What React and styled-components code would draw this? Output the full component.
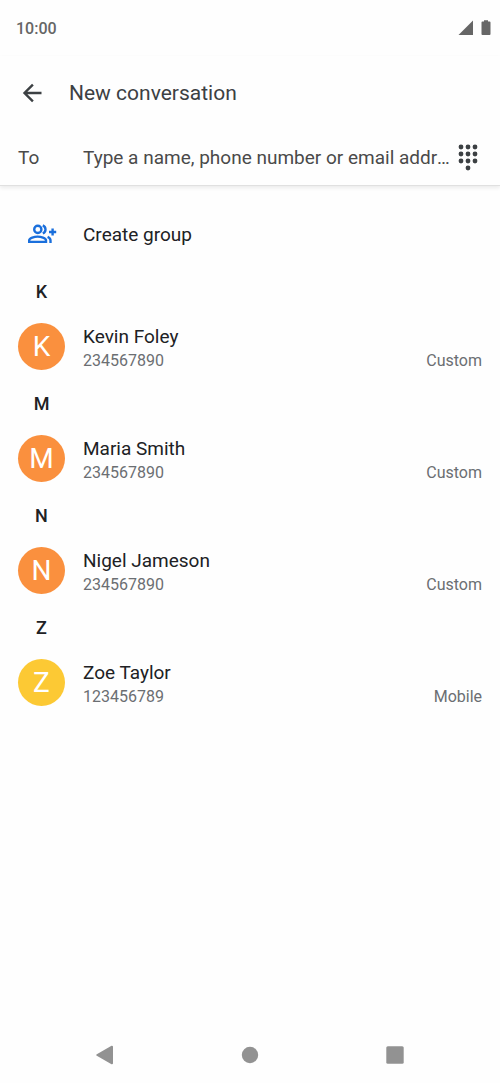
import React from "react";
import styled, { createGlobalStyle } from "styled-components";

const GlobalStyle = createGlobalStyle`
  *, *::before, *::after { box-sizing: border-box; }
  body { margin: 0; background: #fefefe; font-family: Roboto, "Liberation Sans", sans-serif; color: #202124; }
  h1, h2, p, ul { margin: 0; padding: 0; font-weight: 400; }
  button, input { font: inherit; color: inherit; border: 0; padding: 0; background: none; }
  button { cursor: pointer; }
  svg { display: block; }
`;

const Screen = styled.div`
  display: flex;
  flex-direction: column;
  min-height: 100vh;
`;

const StatusBar = styled.div`
  display: flex;
  align-items: center;
  justify-content: space-between;
  height: 56px;
  padding: 0 9px 0 16px;
  color: #666666;
`;

const Clock = styled.time`
  padding-top: 1px;
  font-size: 16px;
  line-height: 24px;
  font-weight: 500;
`;

const StatusIcons = styled.div`
  display: flex;
  gap: 8px;
`;

const Header = styled.header`
  border-bottom: 1px solid #e0e0e0;
  box-shadow: 0 2px 4px rgba(0, 0, 0, 0.08);
`;

const AppBar = styled.div`
  display: flex;
  align-items: center;
  gap: 23px;
  height: 74px;
  padding: 0 18px;
  color: #3c4043;
`;

const IconButton = styled.button`
  display: grid;
  place-items: center;
  flex: none;
  width: 28px;
  height: 32px;
  color: #3c4043;
`;

const Title = styled.h1`
  font-size: 21px;
  line-height: 32px;
`;

const Recipient = styled.div`
  display: flex;
  align-items: center;
  height: 55px;
  padding: 0 18px;
  color: #4a4a4a;
  font-size: 19px;
  line-height: 24px;
`;

const RecipientLabel = styled.label`
  flex: none;
  width: 65px;
`;

const RecipientInput = styled.input`
  flex: 1;
  min-width: 0;
  height: 32px;
  text-overflow: ellipsis;
  outline: 0;

  &::placeholder { color: #4a4a4a; opacity: 1; }
`;

const Main = styled.main`
  flex: 1;
  padding-top: 16px;
`;

const CreateGroup = styled.button`
  display: flex;
  align-items: center;
  width: 100%;
  height: 65px;
  padding: 0 18px;
  font-size: 19px;
  line-height: 24px;
  text-align: left;
`;

const GroupIcon = styled.span`
  display: flex;
  justify-content: center;
  width: 47px;
  margin-right: 18px;
  padding-bottom: 2px;
  color: #1a6fdc;
`;

const Letter = styled.h2`
  width: 47px;
  height: 50px;
  margin-left: 18px;
  font-size: 18px;
  line-height: 50px;
  font-weight: 500;
  text-align: center;
`;

const Contact = styled.button`
  display: flex;
  align-items: center;
  width: 100%;
  height: 62px;
  padding: 0 18px 3px;
  text-align: left;
`;

const Avatar = styled.span`
  flex: none;
  width: 47px;
  margin-right: 18px;
  border-radius: 50%;
  background: ${(p) => p.$color};
  color: #fff;
  font-size: 28px;
  line-height: 47px;
  text-align: center;
`;

const Details = styled.span`
  flex: 1;
  display: flex;
  flex-direction: column;
  padding-top: 4px;
`;

const Name = styled.span`
  font-size: 19px;
  line-height: 24px;
`;

const NumberLine = styled.span`
  display: flex;
  justify-content: space-between;
  color: #6b6e72;
  font-size: 16px;
  line-height: 24px;
`;

const NavBar = styled.nav`
  display: grid;
  grid-template-columns: repeat(3, 1fr);
  width: 87%;
  height: 56px;
  margin: 0 auto;
`;

const NavButton = styled.button`
  display: grid;
  place-items: center;
  color: #929292;
`;

const contacts = [
  { letter: "K", name: "Kevin Foley", number: "234567890", type: "Custom", color: "#fa903e" },
  { letter: "M", name: "Maria Smith", number: "234567890", type: "Custom", color: "#fa903e" },
  { letter: "N", name: "Nigel Jameson", number: "234567890", type: "Custom", color: "#fa903e" },
  { letter: "Z", name: "Zoe Taylor", number: "123456789", type: "Mobile", color: "#fcc934" },
];

const dots = [
  [3, 3], [10, 3], [17, 3],
  [3, 10], [10, 10], [17, 10],
  [3, 17], [10, 17], [17, 17],
  [10, 24],
];

export default function App() {
  return (
    <Screen>
      <GlobalStyle />
      <StatusBar>
        <Clock>10:00</Clock>
        <StatusIcons>
          <svg width="15" height="16" viewBox="0 0 15 16" fill="currentColor" aria-hidden="true">
            <path d="M15 0.5V15H0.5z" />
          </svg>
          <svg width="10" height="16" viewBox="0 0 10 16" fill="currentColor" aria-hidden="true">
            <path d="M3 0.2h4v1.3h1.6q.9 0 .9.9v11.7q0 .9-.9.9H1.4q-.9 0-.9-.9V2.4q0-.9.9-.9H3z" />
          </svg>
        </StatusIcons>
      </StatusBar>
      <Header>
        <AppBar>
          <IconButton aria-label="Back">
            <svg width="20" height="20" viewBox="0 0 20 20" fill="none" stroke="currentColor" strokeWidth="2.4" aria-hidden="true">
              <path d="M19.500 10H2.700M10.900 1.600L2.500 10l8.400 8.400" />
            </svg>
          </IconButton>
          <Title>New conversation</Title>
        </AppBar>
        <Recipient>
          <RecipientLabel htmlFor="recipient">To</RecipientLabel>
          <RecipientInput id="recipient" type="text" placeholder="Type a name, phone number or email address" />
          <IconButton aria-label="Dial pad">
            <svg width="20" height="27" viewBox="0 0 20 27" fill="currentColor" aria-hidden="true">
              {dots.map(([x, y]) => (
                <circle key={`${x}-${y}`} cx={x} cy={y} r="2.4" />
              ))}
            </svg>
          </IconButton>
        </Recipient>
      </Header>
      <Main>
        <CreateGroup>
          <GroupIcon>
            <svg width="30" height="20" viewBox="0 0 30 20" fill="none" stroke="currentColor" strokeWidth="2.4" aria-hidden="true">
              <circle cx="10.800" cy="5.400" r="3.600" />
              <path d="M2.200 17.900V16.300c0-2.500 5.300-3.700 8.400-3.700s8.400 1.200 8.400 3.700v1.600z" />
              <path d="M15.800 1.400q2.700 1.200 2.700 4t-2.700 4" />
              <path d="M20.600 12.800q2.900 1.300 2.900 3.600V19" />
              <path d="M22 8h7.200M25.600 4.400v7.200" />
            </svg>
          </GroupIcon>
          Create group
        </CreateGroup>
        {contacts.map((c) => (
          <section key={c.letter}>
            <Letter>{c.letter}</Letter>
            <Contact>
              <Avatar $color={c.color} aria-hidden="true">{c.letter}</Avatar>
              <Details>
                <Name>{c.name}</Name>
                <NumberLine>
                  <span>{c.number}</span>
                  <span>{c.type}</span>
                </NumberLine>
              </Details>
            </Contact>
          </section>
        ))}
      </Main>
      <NavBar aria-label="System navigation">
        <NavButton aria-label="Back">
          <svg width="18" height="20" viewBox="0 0 18 20" fill="currentColor" stroke="currentColor" strokeWidth="2" strokeLinejoin="round" aria-hidden="true">
            <path d="M1.300 10L16 1.700v16.600z" />
          </svg>
        </NavButton>
        <NavButton aria-label="Home">
          <svg width="18" height="18" viewBox="0 0 18 18" fill="currentColor" aria-hidden="true">
            <circle cx="9" cy="9" r="8.200" />
          </svg>
        </NavButton>
        <NavButton aria-label="Overview">
          <svg width="18" height="18" viewBox="0 0 18 18" fill="currentColor" aria-hidden="true">
            <rect x="0.300" y="0.300" width="17.400" height="17.400" rx="1.500" />
          </svg>
        </NavButton>
      </NavBar>
    </Screen>
  );
}
